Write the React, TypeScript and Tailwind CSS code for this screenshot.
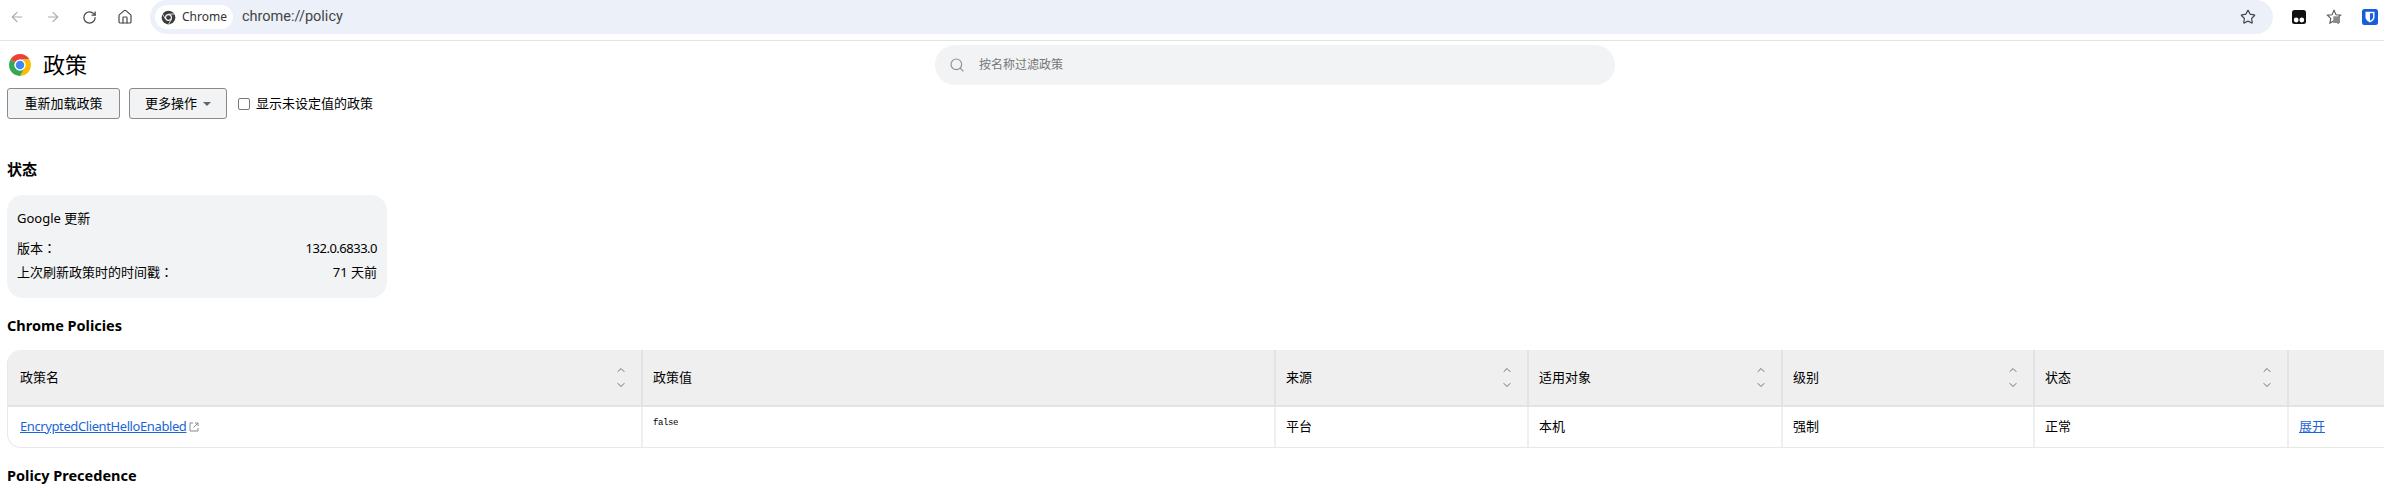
import { ArrowLeft, ArrowRight, ChevronDown, ChevronUp, Home, RotateCw, Search, Star } from 'lucide-react';

const FONT = "font-['Noto_Sans','Noto_Sans_CJK_SC',sans-serif]";

function ChromeLogo({ size }: { size: number }) {
    return (
        <svg width={size} height={size} viewBox="0 0 48 48">
            <path d="M24 2 A22 22 0 0 1 43.05 13 L24 13 A11 11 0 0 0 14.47 18.5 L4.95 13 A22 22 0 0 1 24 2 Z" fill="#ea4335" />
            <path d="M43.05 13 A22 22 0 0 1 24 46 L33.53 29.5 A11 11 0 0 0 33.53 18.5 A11 11 0 0 0 24 13 Z" fill="#fbbc04" />
            <path d="M14.47 18.5 L4.95 13 A22 22 0 0 0 24 46 L33.53 29.5 A11 11 0 0 1 14.47 29.5 A11 11 0 0 1 14.47 18.5 Z" fill="#34a853" />
            <circle cx="24" cy="24" r="11" fill="#fff" />
            <circle cx="24" cy="24" r="8.5" fill="#4285f4" />
        </svg>
    );
}

function ChromeGlyph() {
    return (
        <svg width="15" height="15" viewBox="0 0 48 48">
            <circle cx="24" cy="24" r="22" fill="#3c3c3c" />
            <circle cx="24" cy="24" r="11" fill="#fff" />
            <circle cx="24" cy="24" r="7.5" fill="#3c3c3c" />
            <path d="M24 13 L43 13 M14.5 29.5 L5 13 M33.5 29.5 L24 46" stroke="#fff" strokeWidth="2.5" />
        </svg>
    );
}

function Sorter() {
    return (
        <div className="flex flex-col items-center gap-[3px] text-[#6f6f6f]">
            <ChevronUp size={12} strokeWidth={2} />
            <ChevronDown size={12} strokeWidth={2} />
        </div>
    );
}

function HeaderCell({ label, width, first, sort = true }: { label?: string; width: string; first?: boolean; sort?: boolean }) {
    return (
        <div className={`${width} shrink-0 flex items-center justify-between h-full pr-[14px] ${first ? 'pl-[12px]' : 'pl-[10px] border-l-2 border-[#e3e3e3]'}`}>
            <span className="text-[13px] text-black">{label}</span>
            {sort && <Sorter />}
        </div>
    );
}

function BodyCell({ children, width, first }: { children?: React.ReactNode; width: string; first?: boolean }) {
    return (
        <div className={`${width} shrink-0 flex items-center h-full text-[13px] text-black ${first ? 'pl-[12px]' : 'pl-[10px] border-l-2 border-[#efefef]'}`}>
            {children}
        </div>
    );
}

export default function App() {
    return (
        <div className={`${FONT} w-[2384px] h-[487px] overflow-hidden bg-white`}>
            {/* browser toolbar */}
            <div className="flex items-start h-[41px] border-b border-[#e3e3e3]">
                <div className="flex items-center h-[34px] ml-[-1px] mr-[7px]">
                    <div className="w-9 flex justify-center text-[#a9abae]"><ArrowLeft size={16} strokeWidth={1.7} /></div>
                    <div className="w-9 flex justify-center text-[#a9abae]"><ArrowRight size={16} strokeWidth={1.7} /></div>
                    <div className="w-9 flex justify-center text-[#45484c]"><RotateCw size={15} strokeWidth={2} /></div>
                    <div className="w-9 flex justify-center text-[#45484c]"><Home size={16} strokeWidth={1.8} /></div>
                </div>
                <div className="w-[2123px] h-[34px] shrink-0 rounded-full bg-[#ebf0f9] flex items-center pl-[5px] pr-[17px]">
                    <div className="w-[78px] h-[24px] rounded-full bg-white flex items-center pl-[6px] gap-[6px] text-[12px] text-[#333]">
                        <ChromeGlyph />
                        <span>Chrome</span>
                    </div>
                    <span className="ml-[9px] text-[14.5px] text-[#444] font-['Roboto',sans-serif]">chrome://policy</span>
                    <Star size={16} strokeWidth={1.8} className="ml-auto text-[#45484c]" />
                </div>
                <div className="flex items-center h-[34px] ml-[19px] gap-[20px]">
                    <svg width="14" height="14" viewBox="0 0 14 14" className="shrink-0">
                        <rect width="14" height="14" rx="2.5" fill="#111" />
                        <circle cx="4.2" cy="10" r="2.4" fill="#fff" />
                        <circle cx="9.8" cy="10" r="2.4" fill="#fff" />
                    </svg>
                    <svg width="16" height="16" viewBox="0 0 24 24" className="shrink-0">
                        <path d="M12 2l3 6.6 7 .8-5.2 4.8 1.4 7L12 17.6 5.8 21.2l1.4-7L2 9.4l7-.8z" fill="#fff" stroke="#555" strokeWidth="1.6" />
                        <rect x="11" y="11" width="10" height="10" fill="#8a8a8a" />
                    </svg>
                    <svg width="16" height="16" viewBox="0 0 16 16" className="shrink-0">
                        <rect width="16" height="16" rx="2.5" fill="#175ddc" />
                        <path d="M3.5 2.8h9v5.4c0 2.6-2.4 4.2-4.5 5.2-2.1-1-4.5-2.6-4.5-5.2z" fill="#fff" />
                        <path d="M8 4.2h3.1v4c0 1.6-1.6 2.7-3.1 3.5z" fill="#175ddc" />
                    </svg>
                </div>
            </div>

            {/* page */}
            <div className="pl-[7px]">
                <div className="flex">
                    <div className="w-[928px] shrink-0">
                        <div className="flex items-center h-[47px] pl-px gap-[11px]">
                            <ChromeLogo size={24} />
                            <h1 className="text-[22px] text-black">政策</h1>
                        </div>
                        <div className="flex items-center h-[31px] gap-[9px]">
                            <button className="w-[113px] h-[31px] rounded-[3px] border border-[#8a8a8a] bg-[#f1f3f4] text-[13px] text-black">重新加载政策</button>
                            <button className="w-[98px] h-[31px] rounded-[3px] border border-[#8a8a8a] bg-[#f1f3f4] text-[13px] text-black flex items-center justify-center gap-[6px]">
                                更多操作
                                <span className="w-0 h-0 border-x-[4px] border-x-transparent border-t-[4px] border-t-[#666]" />
                            </button>
                            <label className="flex items-center gap-[6px] ml-[2px] text-[13px] text-black">
                                <span className="w-[12px] h-[12px] rounded-[2px] border border-[#767676] bg-white" />
                                显示未设定值的政策
                            </label>
                        </div>
                    </div>
                    <div className="w-[680px] h-[40px] mt-[4px] rounded-[20px] bg-[#f1f3f4] flex items-center pl-[14px] gap-[14px] text-[12px] text-[#777]">
                        <Search size={16} strokeWidth={1.7} className="text-[#8e9297]" />
                        <span>按名称过滤政策</span>
                    </div>
                </div>

                <h2 className="mt-[40px] h-[20px] leading-[20px] text-[15px] font-bold text-black">状态</h2>

                <div className="mt-[16px] w-[380px] h-[103px] rounded-[16px] bg-[#f1f3f4] px-[10px] pt-[13px] text-[13px] text-black">
                    <div className="h-[20px] leading-[20px]">Google 更新</div>
                    <div className="mt-[10px] h-[20px] leading-[20px] flex justify-between">
                        <span>版本<span className="font-['Noto_Sans_CJK_TC',sans-serif]">：</span></span>
                        <span className="tracking-[-0.5px]">132.0.6833.0</span>
                    </div>
                    <div className="mt-[4px] h-[20px] leading-[20px] flex justify-between">
                        <span>上次刷新政策时的时间戳<span className="font-['Noto_Sans_CJK_TC',sans-serif]">：</span></span>
                        <span>71 天前</span>
                    </div>
                </div>

                <h2 className="mt-[17px] h-[20px] leading-[20px] text-[14.5px] font-bold text-black">Chrome Policies</h2>

                <div className="mt-[15px] w-[2400px] h-[98px] rounded-tl-[14px] rounded-bl-[14px] overflow-hidden border-l border-b border-[#e8e8e8]">
                    <div className="flex items-center h-[57px] bg-[#efefef] border-b-2 border-[#e3e3e3]">
                        <HeaderCell first width="w-[633px]" label="政策名" />
                        <HeaderCell width="w-[633px]" label="政策值" sort={false} />
                        <HeaderCell width="w-[253px]" label="来源" />
                        <HeaderCell width="w-[254px]" label="适用对象" />
                        <HeaderCell width="w-[252px]" label="级别" />
                        <HeaderCell width="w-[254px]" label="状态" />
                        <HeaderCell width="w-[120px]" sort={false} />
                    </div>
                    <div className="flex items-center h-[40px]">
                        <BodyCell first width="w-[633px]">
                            <a className="text-[#1a66d6] underline tracking-[-0.4px]">EncryptedClientHelloEnabled</a>
                            <svg width="10" height="10" viewBox="0 0 10 10" fill="none" stroke="#8a8a8a" strokeWidth="1" className="ml-[3px]">
                                <path d="M4 1H1v8h8V6M6 1h3v3M9 1 4.5 5.5" />
                            </svg>
                        </BodyCell>
                        <BodyCell width="w-[633px]">
                            <span className="mb-[6px] text-[9px] tracking-[-0.4px] font-['Liberation_Mono',monospace]">false</span>
                        </BodyCell>
                        <BodyCell width="w-[253px]">平台</BodyCell>
                        <BodyCell width="w-[254px]">本机</BodyCell>
                        <BodyCell width="w-[252px]">强制</BodyCell>
                        <BodyCell width="w-[254px]">正常</BodyCell>
                        <BodyCell width="w-[120px]"><a className="text-[#1a66d6] underline">展开</a></BodyCell>
                    </div>
                </div>

                <h2 className="mt-[17px] h-[20px] leading-[20px] text-[14.5px] font-bold text-black">Policy Precedence</h2>
            </div>
        </div>
    );
}
